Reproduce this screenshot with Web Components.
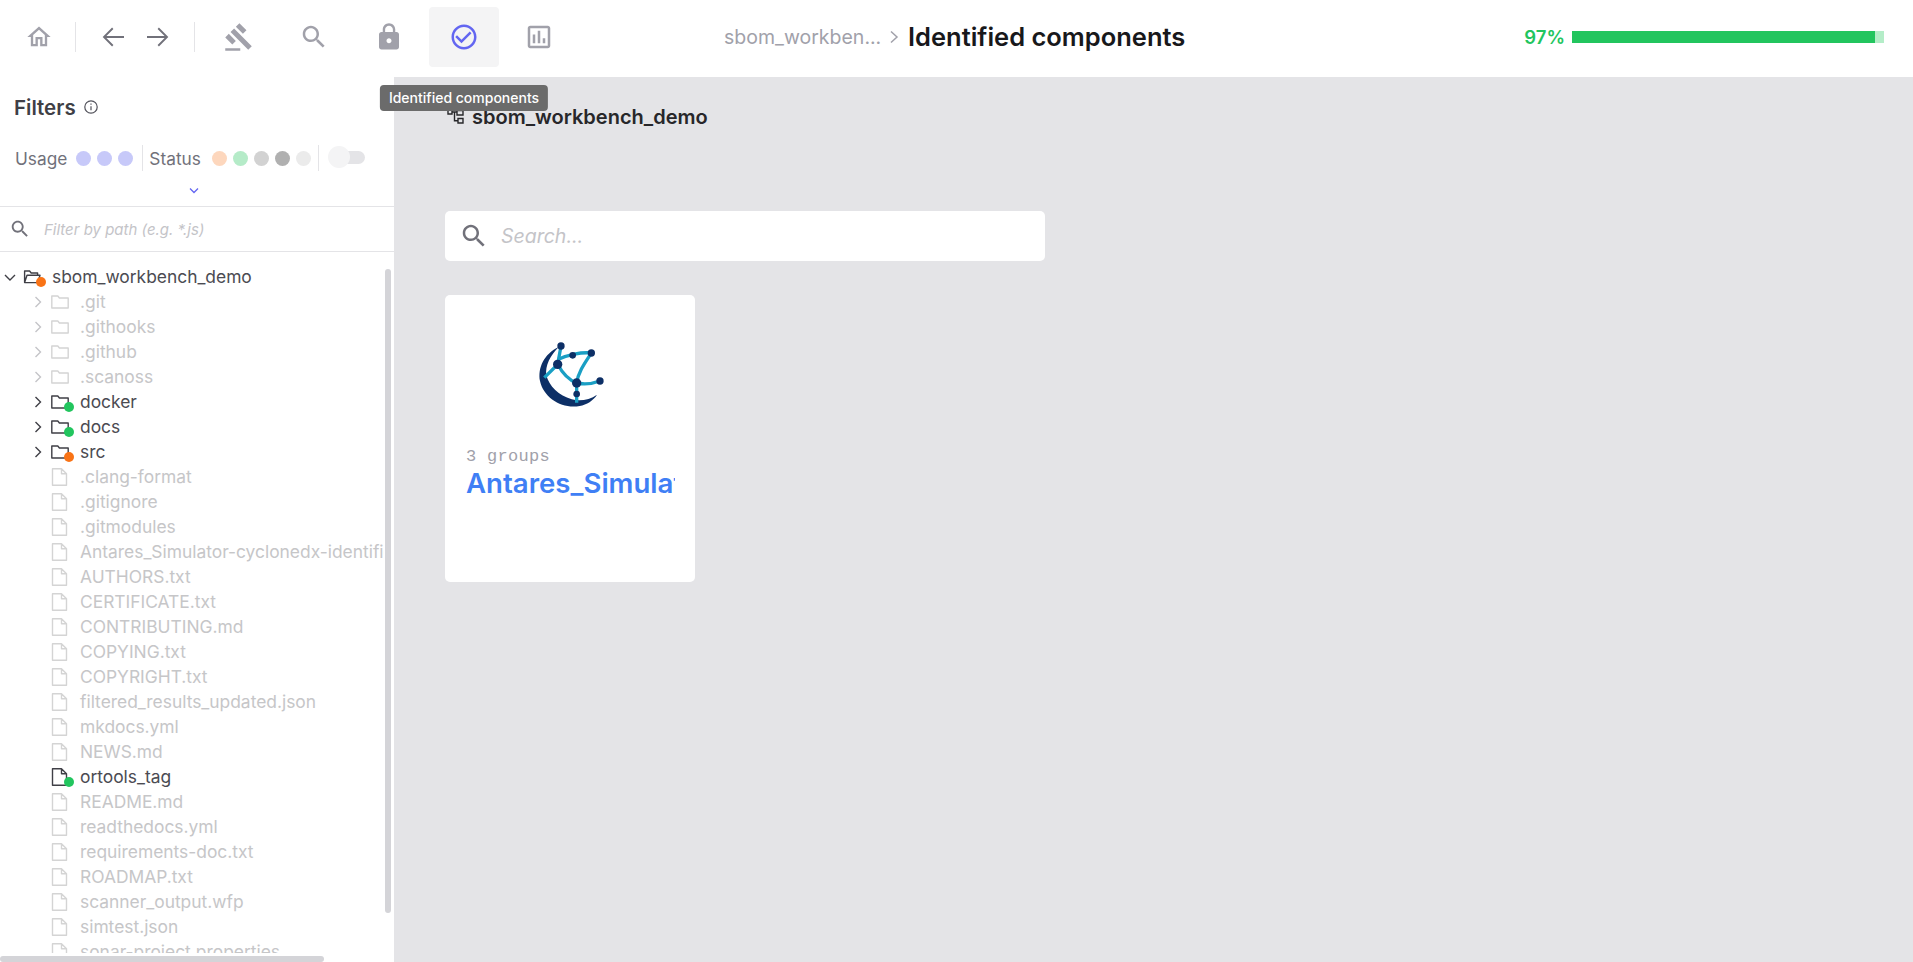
<!DOCTYPE html>
<html lang="en">
<head>
<meta charset="utf-8">
<title>Identified components</title>
<style>
    html, body { margin: 0; height: 100%; overflow: hidden; background: #fff; }
    body { font-family: Inter, "Liberation Sans", sans-serif; }
</style>
</head>
<body>
<app-shell>
    <app-header slot="header"></app-header>
    <filter-panel slot="side"></filter-panel>
    <component-view slot="main"></component-view>
</app-shell>

<script>
const ICONS = {
    home: "M12 5.69l5 4.5V18h-2v-6H9v6H7v-7.81l5-4.5M12 3L2 12h3v8h6v-6h2v6h6v-8h3L12 3z",
    gavel: "M1 21h12v2H1zM5.245 8.07l2.83-2.827 14.14 14.142-2.828 2.828zM12.317 1l5.657 5.656-2.83 2.83-5.654-5.66zM3.825 9.485l5.657 5.657-2.828 2.828-5.657-5.657z",
    search: "M15.5 14h-.79l-.28-.27C15.41 12.59 16 11.11 16 9.5 16 5.91 13.09 3 9.5 3S3 5.91 3 9.5 5.91 16 9.5 16c1.61 0 3.09-.59 4.23-1.57l.27.28v.79l5 4.99L20.49 19l-4.99-5zm-6 0C7.01 14 5 11.99 5 9.5S7.01 5 9.5 5 14 7.01 14 9.5 11.99 14 9.5 14z",
    lock: "M18 8h-1V6c0-2.76-2.24-5-5-5S7 3.24 7 6v2H6c-1.1 0-2 .9-2 2v10c0 1.1.9 2 2 2h12c1.1 0 2-.9 2-2V10c0-1.1-.9-2-2-2zm-6 9c-1.1 0-2-.9-2-2s.9-2 2-2 2 .9 2 2-.9 2-2 2zm3.1-9H8.9V6c0-1.71 1.39-3.1 3.1-3.1 1.71 0 3.1 1.39 3.1 3.1v2z",
    check: "M16.59 7.58L10 14.17l-3.59-3.58L5 12l5 5 8-8zM12 2C6.48 2 2 6.48 2 12s4.48 10 10 10 10-4.48 10-10S17.52 2 12 2zm0 18c-4.42 0-8-3.58-8-8s3.58-8 8-8 8 3.58 8 8-3.58 8-8 8z",
    report: "M9 17H7v-7h2v7zm4 0h-2V7h2v10zm4 0h-2v-4h2v4zm2 2H5V5h14v14zm0-16H5c-1.1 0-2 .9-2 2v14c0 1.1.9 2 2 2h14c1.1 0 2-.9 2-2V5c0-1.1-.9-2-2-2z",
};

function icon(name, size, color) {
    return `<svg width="${size}" height="${size}" viewBox="0 0 24 24" fill="${color}"><path d="${ICONS[name]}"/></svg>`;
}

class AppShell extends HTMLElement {
    constructor() {
        super();
        this.attachShadow({ mode: "open" }).innerHTML = `
            <style>
                :host { display: flex; flex-direction: column; height: 962px; width: 1913px; overflow: hidden; }
                .body { display: flex; flex: 1; min-height: 0; }
            </style>
            <slot name="header"></slot>
            <div class="body">
                <slot name="side"></slot>
                <slot name="main"></slot>
            </div>
        `;
    }
}

class NavItem extends HTMLElement {
    constructor() {
        super();
        const name = this.getAttribute("icon");
        const active = this.hasAttribute("active");
        this.attachShadow({ mode: "open" }).innerHTML = `
            <style>
                :host { display: flex; position: relative; width: 70px; height: 60px; align-items: center; justify-content: center; border-radius: 4px; }
                :host([active]) { background: #f4f4f5; }
            </style>
            ${icon(name, 30, active ? "#6366f1" : "#a1a1aa")}
            <slot></slot>
        `;
    }
}

class ToolTip extends HTMLElement {
    constructor() {
        super();
        this.attachShadow({ mode: "open" }).innerHTML = `
            <style>
                :host { position: absolute; top: 78px; left: 50%; transform: translateX(-50%); display: block; white-space: nowrap;
                    background: #6b6b6b; color: #fff; font-size: 14px; font-weight: 500; line-height: 26px; padding: 0 9px; border-radius: 4px; }
            </style>
            <slot></slot>
        `;
    }
}

class ProgressBar extends HTMLElement {
    constructor() {
        super();
        const value = this.getAttribute("value");
        this.attachShadow({ mode: "open" }).innerHTML = `
            <style>
                :host { display: flex; align-items: center; gap: 7px; }
                .label { color: #22c55e; font-size: 18.5px; font-weight: 600; line-height: 24px; }
                .track { width: 312px; height: 12px; background: #b4edc8; }
                .fill { height: 100%; width: ${value}%; background: #22c55e; }
            </style>
            <span class="label">${value}%</span>
            <div class="track"><div class="fill"></div></div>
        `;
    }
}

class AppHeader extends HTMLElement {
    constructor() {
        super();
        this.attachShadow({ mode: "open" }).innerHTML = `
            <style>
                :host { display: flex; align-items: center; position: relative; z-index: 2; height: 77px; flex: none; background: #fff; padding: 0 29px 4px 14px; box-sizing: border-box; }
                .home { width: 50px; display: flex; justify-content: center; margin-right: 11px; }
                .divider { width: 1px; height: 30px; background: #e4e4e7; flex: none; }
                .arrows { display: flex; gap: 13.5px; margin: 0 22px 0 22.5px; }
                .arrows svg { width: 30px; height: 30px; fill: none; stroke: #71717a; stroke-width: 1.5; }
                nav { display: flex; gap: 5px; margin-left: 9px; }
                .crumbs { display: flex; align-items: center; margin-left: 150px; white-space: nowrap; }
                .parent { color: #a1a1aa; font-size: 19.5px; width: 160px; }
                .crumbs svg { width: 12px; height: 16px; margin: 0 8px 0 4px; fill: none; stroke: #a1a1aa; stroke-width: 1.5; }
                .current { color: #18181b; font-size: 25.5px; font-weight: 600; }
                progress-bar { margin-left: auto; }
            </style>
            <div class="home">${icon("home", 28, "#a1a1aa")}</div>
            <div class="divider"></div>
            <div class="arrows">
                <svg viewBox="0 0 24 24"><path d="M20 12H4M11 5l-7 7 7 7"/></svg>
                <svg viewBox="0 0 24 24"><path d="M4 12h16M13 5l7 7-7 7"/></svg>
            </div>
            <div class="divider"></div>
            <nav>
                <nav-item icon="gavel"></nav-item>
                <nav-item icon="search"></nav-item>
                <nav-item icon="lock"></nav-item>
                <nav-item icon="check" active><tool-tip>Identified components</tool-tip></nav-item>
                <nav-item icon="report"></nav-item>
            </nav>
            <div class="crumbs">
                <span class="parent">sbom_workben...</span>
                <svg viewBox="0 0 12 16"><path d="M3 2.5L9 8l-6 5.5"/></svg>
                <span class="current">Identified components</span>
            </div>
            <progress-bar value="97"></progress-bar>
        `;
    }
}

class StatusDot extends HTMLElement {
    constructor() {
        super();
        const color = this.getAttribute("color");
        this.attachShadow({ mode: "open" }).innerHTML = `
            <style>
                :host { display: block; width: 15px; height: 15px; border-radius: 50%; background: ${color}; flex: none; }
            </style>
        `;
    }
}

class FilterPanel extends HTMLElement {
    constructor() {
        super();
        this.attachShadow({ mode: "open" }).innerHTML = `
            <style>
                :host { display: flex; flex-direction: column; position: relative; width: 394px; flex: none; background: #fff; overflow: hidden; box-sizing: border-box; }
                .title { display: flex; align-items: center; gap: 7px; padding: 18px 0 0 14px; height: 24px; color: #3f3f46; font-size: 20.5px; font-weight: 600; }
                .title svg { width: 16px; height: 16px; fill: none; stroke: #52525b; stroke-width: 1.2; }
                .legend { display: flex; align-items: center; height: 26px; margin-top: 26px; padding-left: 15px; color: #71717a; font-size: 17.3px; }
                .dots { display: flex; gap: 6px; margin-left: 8.5px; }
                .sep { width: 1px; height: 26px; background: #e4e4e7; flex: none; }
                .toggle { position: relative; width: 32px; height: 13px; margin: -2px 0 0 14px; background: #e4e4e7; border-radius: 7px; flex: none; }
                .knob { position: absolute; left: -5px; top: -5px; width: 22px; height: 22px; border-radius: 50%; background: #f4f4f5; }
                .more { display: flex; justify-content: center; width: 388px; height: 35px; padding-top: 16px; box-sizing: border-box; }
                .more svg { width: 10px; height: 7px; fill: none; stroke: #6366f1; stroke-width: 1.3; }
                .path { display: flex; align-items: center; height: 44px; border-top: 1px solid #e4e4e7; border-bottom: 1px solid #e4e4e7; padding-left: 9px; gap: 13px; color: #c4c4c8; font-size: 15px; font-style: italic; }
                .tree { flex: 1; min-height: 0; overflow: hidden; margin: 0 10px 9px 0; padding-top: 12px; }
                .vbar { position: absolute; left: 385px; top: 192px; width: 6px; height: 644px; background: #d4d4d8; border-radius: 3px; }
                .hbar { position: absolute; left: 0; bottom: 0; width: 324px; height: 6px; background: #d4d4d8; border-radius: 3px; }
            </style>
            <div class="title">
                Filters
                <svg viewBox="0 0 16 16"><circle cx="8" cy="8" r="6.2"/><path d="M8 7.2v4M8 4.4v1.4"/></svg>
            </div>
            <div class="legend">
                Usage
                <div class="dots" style="margin-right: 9.5px">
                    <status-dot color="#c7c9f9"></status-dot>
                    <status-dot color="#c7c9f9"></status-dot>
                    <status-dot color="#c7c9f9"></status-dot>
                </div>
                <div class="sep"></div>
                <span style="margin-left: 6px">Status</span>
                <div class="dots" style="margin: 0 7.5px 0 11px">
                    <status-dot color="#fdd7bd"></status-dot>
                    <status-dot color="#b5ebc8"></status-dot>
                    <status-dot color="#d2d2d2"></status-dot>
                    <status-dot color="#b0b0b0"></status-dot>
                    <status-dot color="#ebebeb"></status-dot>
                </div>
                <div class="sep"></div>
                <div class="toggle"><div class="knob"></div></div>
            </div>
            <div class="more"><svg viewBox="0 0 10 7"><path d="M1 1.5l4 4 4-4"/></svg></div>
            <div class="path">
                ${icon("search", 22, "#71717a")}
                <span>Filter by path (e.g. *.js)</span>
            </div>
            <div class="tree">
                <tree-row kind="open" level="0" status="orange">sbom_workbench_demo</tree-row>
                <tree-row kind="folder" level="1" dim>.git</tree-row>
                <tree-row kind="folder" level="1" dim>.githooks</tree-row>
                <tree-row kind="folder" level="1" dim>.github</tree-row>
                <tree-row kind="folder" level="1" dim>.scanoss</tree-row>
                <tree-row kind="folder" level="1" status="green">docker</tree-row>
                <tree-row kind="folder" level="1" status="green">docs</tree-row>
                <tree-row kind="folder" level="1" status="orange">src</tree-row>
                <tree-row kind="file" level="1" dim>.clang-format</tree-row>
                <tree-row kind="file" level="1" dim>.gitignore</tree-row>
                <tree-row kind="file" level="1" dim>.gitmodules</tree-row>
                <tree-row kind="file" level="1" dim>Antares_Simulator-cyclonedx-identified.json</tree-row>
                <tree-row kind="file" level="1" dim>AUTHORS.txt</tree-row>
                <tree-row kind="file" level="1" dim>CERTIFICATE.txt</tree-row>
                <tree-row kind="file" level="1" dim>CONTRIBUTING.md</tree-row>
                <tree-row kind="file" level="1" dim>COPYING.txt</tree-row>
                <tree-row kind="file" level="1" dim>COPYRIGHT.txt</tree-row>
                <tree-row kind="file" level="1" dim>filtered_results_updated.json</tree-row>
                <tree-row kind="file" level="1" dim>mkdocs.yml</tree-row>
                <tree-row kind="file" level="1" dim>NEWS.md</tree-row>
                <tree-row kind="file" level="1" status="green">ortools_tag</tree-row>
                <tree-row kind="file" level="1" dim>README.md</tree-row>
                <tree-row kind="file" level="1" dim>readthedocs.yml</tree-row>
                <tree-row kind="file" level="1" dim>requirements-doc.txt</tree-row>
                <tree-row kind="file" level="1" dim>ROADMAP.txt</tree-row>
                <tree-row kind="file" level="1" dim>scanner_output.wfp</tree-row>
                <tree-row kind="file" level="1" dim>simtest.json</tree-row>
                <tree-row kind="file" level="1" dim>sonar-project.properties</tree-row>
            </div>
            <div class="vbar"></div>
            <div class="hbar"></div>
        `;
    }
}

class TreeRow extends HTMLElement {
    constructor() {
        super();
        const kind = this.getAttribute("kind");
        const level = Number(this.getAttribute("level"));
        const status = this.getAttribute("status");
        const shapes = {
            open: `<path d="M1.6 14.6V3h5l1.6 2h6.4v2.2M1.6 14.6L4 7.2h13L14.6 14.6z"/>`,
            folder: `<path d="M0.8 3h6l1.6 2h8.8v10H0.8z"/>`,
            file: `<path d="M1.5 0.7h9l5 5V17.3H1.5zM10.5 0.7v5h5"/>`,
        };
        const chevron = kind === "file" ? "" : kind === "open"
            ? `<path d="M3 6l5 5 5-5"/>`
            : `<path d="M5.5 3l5 5-5 5"/>`;
        const dotColor = status === "green" ? "#22c55e" : "#f97316";
        this.attachShadow({ mode: "open" }).innerHTML = `
            <style>
                :host { display: flex; align-items: center; height: 25px; padding-left: ${2 + level * 28}px; white-space: nowrap; color: #4b4b52; font-size: 17.4px; --line: #3f3f46; --arrow: #3f3f46; }
                :host([dim]) { color: #c6c6c8; --line: #d4d4d4; --arrow: #c4c4c8; }
                .chev { width: 16px; height: 16px; flex: none; fill: none; stroke: var(--arrow); stroke-width: 1.4; }
                .glyph { position: relative; width: 18px; height: 18px; margin: 0 11px 0 5px; flex: none; }
                .glyph svg { display: block; fill: none; stroke: var(--line); stroke-width: 1.4; stroke-linejoin: round; }
                .dot { position: absolute; right: -5px; bottom: -1px; width: 10px; height: 10px; border-radius: 50%; background: ${dotColor}; }
            </style>
            <svg class="chev" viewBox="0 0 16 16">${chevron}</svg>
            <div class="glyph">
                <svg width="18" height="18" viewBox="0 0 18 18">${shapes[kind]}</svg>
                ${status ? `<div class="dot"></div>` : ""}
            </div>
            <slot></slot>
        `;
    }
}

class SearchBox extends HTMLElement {
    constructor() {
        super();
        this.attachShadow({ mode: "open" }).innerHTML = `
            <style>
                :host { display: flex; align-items: center; gap: 12px; width: 600px; height: 50px; padding-left: 14px; box-sizing: border-box; background: #fff; border-radius: 5px; color: #c4c4c8; font-size: 19.5px; font-style: italic; }
            </style>
            ${icon("search", 30, "#71717a")}
            <slot></slot>
        `;
    }
}

class ComponentCard extends HTMLElement {
    constructor() {
        super();
        this.attachShadow({ mode: "open" }).innerHTML = `
            <style>
                :host { display: block; width: 250px; height: 287px; padding: 37px 20px 0 21px; box-sizing: border-box; background: #fff; border-radius: 5px; }
                .logo { display: block; margin: 0 auto 35px; }
                .groups { color: #a1a1aa; font-family: "Liberation Mono", monospace; font-size: 17px; line-height: 20px; letter-spacing: 0.3px; }
                .name { color: #3f7ff5; font-size: 27.6px; font-weight: 600; line-height: 32px; white-space: nowrap; overflow: hidden; }
            </style>
            <svg class="logo" width="100" height="80" viewBox="0 0 300 240">
                <path d="M114 44C68 66 50 108 57 147C68 198 124 232 176 222C197 218 217 206 228 188C206 204 176 209 152 202C114 191 84 163 76 130C72 100 88 70 114 44Z" fill="#0d2f66"/>
                <g fill="none" stroke="#1a9fc4" stroke-width="10">
                    <path d="M120 42L110 97L70 137"/>
                    <path d="M110 97C125 125 145 145 167 153"/>
                    <path d="M112 82C140 68 180 60 211 63"/>
                    <path d="M211 63C190 95 172 120 167 153L167 212"/>
                    <path d="M167 153C190 158 215 155 237 147"/>
                </g>
                <g fill="#0d2f66">
                    <circle cx="120" cy="42" r="11"/>
                    <circle cx="155" cy="70" r="10"/>
                    <circle cx="211" cy="63" r="11"/>
                    <circle cx="110" cy="97" r="14"/>
                    <circle cx="167" cy="153" r="14"/>
                    <circle cx="237" cy="147" r="11"/>
                    <circle cx="167" cy="186" r="10"/>
                </g>
            </svg>
            <div class="groups"><slot name="groups"></slot></div>
            <div class="name"><slot name="name"></slot></div>
        `;
    }
}

class ComponentView extends HTMLElement {
    constructor() {
        super();
        this.attachShadow({ mode: "open" }).innerHTML = `
            <style>
                :host { display: flex; flex-direction: column; flex: 1; background: #e4e4e7; padding: 28px 0 0 51px; box-sizing: border-box; }
                .title { display: flex; align-items: center; gap: 8px; height: 24px; color: #27272a; font-size: 20px; font-weight: 600; margin-bottom: 82px; }
                .title svg { width: 18px; height: 16px; margin-left: 1px; fill: none; stroke: #27272a; stroke-width: 1.4; }
                component-card { margin-top: 34px; }
            </style>
            <div class="title">
                <svg viewBox="0 0 18 16"><path d="M2 1h4v4H2zM11 1.5h6V6h-6zM12 9.5h5V14h-5zM6 3h5M8.5 3v8.8H12"/></svg>
                sbom_workbench_demo
            </div>
            <search-box>Search...</search-box>
            <component-card>
                <span slot="groups">3 groups</span>
                <span slot="name">Antares_Simulator</span>
            </component-card>
        `;
    }
}

customElements.define("app-shell", AppShell);
customElements.define("nav-item", NavItem);
customElements.define("tool-tip", ToolTip);
customElements.define("progress-bar", ProgressBar);
customElements.define("app-header", AppHeader);
customElements.define("status-dot", StatusDot);
customElements.define("filter-panel", FilterPanel);
customElements.define("tree-row", TreeRow);
customElements.define("search-box", SearchBox);
customElements.define("component-card", ComponentCard);
customElements.define("component-view", ComponentView);
</script>
</body>
</html>
